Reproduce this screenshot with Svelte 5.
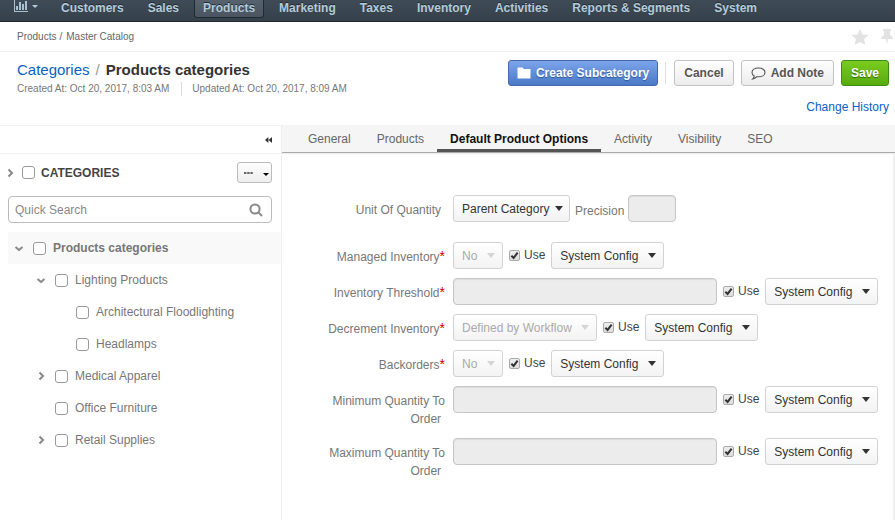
<script>
  const nav = ['Customers', 'Sales', 'Products', 'Marketing', 'Taxes', 'Inventory', 'Activities', 'Reports & Segments', 'System'];
  const tabs = ['General', 'Products', 'Default Product Options', 'Activity', 'Visibility', 'SEO'];
  const tree = [
    { name: 'Products categories', level: 0, state: 'open', selected: true },
    { name: 'Lighting Products', level: 1, state: 'open' },
    { name: 'Architectural Floodlighting', level: 2 },
    { name: 'Headlamps', level: 2 },
    { name: 'Medical Apparel', level: 1, state: 'closed' },
    { name: 'Office Furniture', level: 1 },
    { name: 'Retail Supplies', level: 1, state: 'closed' }
  ];
  const fields = [
    { id: 'managed', label: 'Managed Inventory', required: true, value: 'No' },
    { id: 'threshold', label: 'Inventory Threshold', required: true },
    { id: 'decrement', label: 'Decrement Inventory', required: true, value: 'Defined by Workflow' },
    { id: 'backorders', label: 'Backorders', required: true, value: 'No' },
    { id: 'minimum', label: 'Minimum Quantity To Order' },
    { id: 'maximum', label: 'Maximum Quantity To Order' }
  ];
</script>

{#snippet chevron(state)}
  <svg class="chevron" viewBox="0 0 10 10" aria-hidden="true">
    {#if state === 'open'}
      <path d="M1.5 4 L5 7 L8.5 4" />
    {:else if state === 'closed'}
      <path d="M3.5 1.5 L7 5 L3.5 8.5" />
    {/if}
  </svg>
{/snippet}

<div class="page">
  <nav class="topnav">
    <a class="dash" href="#dashboard" aria-label="Dashboards">
      <svg width="14" height="12" viewBox="0 0 14 12" aria-hidden="true">
        <path d="M0 0 H1 V11 H14 V12 H0 Z M2 6 H4 V10 H2 Z M5 2 H7 V10 H5 Z M8 4 H10 V10 H8 Z M11 1 H13 V10 H11 Z" fill="#a9c0cf" />
      </svg>
      <span class="caret"></span>
    </a>
    {#each nav as item}
      <a href="#top" class:current={item === 'Products'}>{item}</a>
    {/each}
  </nav>

  <div class="crumbs">
    <div class="trail"><a href="#products">Products</a><span>/</span><a href="#master">Master Catalog</a></div>
    <div class="marks">
      <button aria-label="Favorite">
        <svg width="18" height="16" viewBox="0 0 18 16"><path d="M9 0 L11.5 5.4 L17.5 6.1 L13.1 10 L14.3 16 L9 13 L3.7 16 L4.9 10 L.5 6.1 L6.5 5.4 Z" fill="#e2e2e2" /></svg>
      </button>
      <button aria-label="Pin">
        <svg width="12" height="16" viewBox="0 0 12 16"><path d="M2 0 H10 V2 H9 V6 Q12 7.5 12 10 H7 L6 16 L5 10 H0 Q0 7.5 3 6 V2 H2 Z" fill="#e2e2e2" /></svg>
      </button>
    </div>
  </div>

  <header>
    <div>
      <h1><a href="#categories">Categories</a><span>/</span>Products categories</h1>
      <div class="dates"><span>Created At: Oct 20, 2017, 8:03 AM</span><span>Updated At: Oct 20, 2017, 8:09 AM</span></div>
    </div>
    <div class="actions">
      <div class="buttons">
        <button class="btn blue">
          <svg width="14" height="12" viewBox="0 0 14 12" aria-hidden="true"><path d="M1 .5 H5.5 L6.8 2 H13 Q13.5 2 13.5 2.6 V11 Q13.5 11.5 13 11.5 H1 Q.5 11.5 .5 11 V1 Q.5 .5 1 .5 Z" fill="#fff" /></svg>
          Create Subcategory
        </button>
        <span class="rule"></span>
        <button class="btn">Cancel</button>
        <button class="btn">
          <svg width="15" height="13" viewBox="0 0 15 13" aria-hidden="true"><path d="M7.5 1 C11.2 1 14 2.9 14 5.4 C14 7.9 11.2 9.8 7.5 9.8 Q6.8 9.8 6 9.7 Q4.4 11.4 1.8 12 Q3.1 10.7 3.2 8.9 Q1 7.6 1 5.4 C1 2.9 3.8 1 7.5 1 Z" fill="none" stroke="#555" stroke-width="1.1" /></svg>
          Add Note
        </button>
        <button class="btn green">Save</button>
      </div>
      <a href="#history">Change History</a>
    </div>
  </header>

  <main>
    <aside>
      <div class="collapse">
        <button aria-label="Collapse sidebar">
          <svg width="7" height="6" viewBox="0 0 7 6"><path d="M3.4 0 V6 L0 3 Z M7 0 V6 L3.6 3 Z" fill="#333" /></svg>
        </button>
      </div>
      <div class="root">
        {@render chevron('closed')}
        <label><input type="checkbox" /><span>CATEGORIES</span></label>
        <button class="more" aria-label="More actions">
          <svg width="9" height="2" viewBox="0 0 9 2"><path d="M0 0 H2.4 V2 H0 Z M3.2 0 H5.6 V2 H3.2 Z M6.4 0 H8.8 V2 H6.4 Z" fill="#666" /></svg>
          <span class="caret"></span>
        </button>
      </div>
      <div class="search">
        <input type="text" placeholder="Quick Search" aria-label="Quick Search" />
        <svg width="14" height="14" viewBox="0 0 14 14" aria-hidden="true"><circle cx="6" cy="6" r="4.6" /><path d="M9.4 9.4 L13 13" /></svg>
      </div>
      <ul>
        {#each tree as node}
          <li class="level{node.level}" class:selected={node.selected}>
            {@render chevron(node.state)}
            <label><input type="checkbox" /><span>{node.name}</span></label>
          </li>
        {/each}
      </ul>
    </aside>

    <section>
      <div class="tabs">
        {#each tabs as tab}
          <a href="#tab" class:active={tab === 'Default Product Options'}>{tab}</a>
        {/each}
      </div>
      <form>
        <div class="row first">
          <label class="name" for="unit">Unit Of Quantity<em>&nbsp;</em></label>
          <div class="select near"><select id="unit"><option>Parent Category</option></select></div>
          <label class="precision" for="precision">Precision</label>
          <input class="short" id="precision" type="text" disabled />
        </div>
        {#each fields as field}
          <div class="row">
            <label class="name" for={field.id}>{field.label}{#if field.required}<em>*</em>{:else}<em>&nbsp;</em>{/if}</label>
            {#if field.value}
              <div class="select off"><select id={field.id} disabled><option>{field.value}</option></select></div>
            {:else}
              <input class="long" id={field.id} type="text" disabled />
            {/if}
            <label class="use"><input type="checkbox" checked />Use</label>
            <div class="select"><select aria-label="{field.label} fallback"><option>System Config</option></select></div>
          </div>
        {/each}
      </form>
    </section>
  </main>
</div>

<style>
  :global(body) {
    margin: 0;
    background: #fff;
  }
  .page {
    display: flex;
    flex-direction: column;
    min-height: 100vh;
    overflow: hidden;
    font: 12px/18px "Liberation Sans", Arial, sans-serif;
    color: #444;
  }
  .page * {
    box-sizing: border-box;
  }
  a {
    color: inherit;
    text-decoration: none;
    white-space: nowrap;
  }
  button, input, select {
    margin: 0;
    font: inherit;
  }
  button {
    display: flex;
    align-items: center;
    padding: 0;
    border: 0;
    background: none;
    cursor: pointer;
  }
  .caret {
    border: 3px solid transparent;
    border-top-color: currentColor;
    border-bottom: 0;
  }

  .topnav {
    display: flex;
    align-items: flex-start;
    gap: 6px;
    height: 22px;
    padding-left: 14px;
    border-bottom: 1px solid #222b33;
    background: linear-gradient(#3f4b57, #35404a);
    color: #b4cbda;
    font-weight: bold;
  }
  .topnav a {
    height: 18px;
    padding: 0 9px;
    line-height: 16px;
    text-shadow: 0 -1px 0 #222b33;
  }
  .topnav .dash {
    display: flex;
    align-items: center;
    gap: 4px;
    height: 12px;
    padding: 0 8px 0 0;
  }
  .topnav .current {
    border: 1px solid #222a31;
    border-top: 0;
    border-radius: 0 0 3px 3px;
    padding: 0 8px;
    background: linear-gradient(#56626e, #4a5561);
  }

  .crumbs {
    display: flex;
    align-items: center;
    justify-content: space-between;
    height: 30px;
    padding-left: 17px;
    border-bottom: 1px solid #eee;
    font-size: 10px;
    color: #666;
  }
  .trail span {
    margin: 0 4px 0 3px;
  }
  .marks {
    display: flex;
    gap: 12px;
    padding-right: 2px;
  }

  header {
    display: flex;
    justify-content: space-between;
    padding: 8px 6px 9px 17px;
  }
  h1 {
    margin: 0;
    font-size: 15px;
    line-height: 20px;
    color: #333;
  }
  h1 a, .actions > a {
    color: #0a5fc4;
    font-weight: normal;
  }
  h1 span {
    margin: 0 6px;
    color: #999;
    font-weight: normal;
  }
  .dates {
    display: flex;
    margin-top: 2px;
    font-size: 10px;
    line-height: 14px;
    color: #777;
  }
  .dates span + span {
    margin-left: 12px;
    padding-left: 10px;
    border-left: 1px solid #ddd;
  }
  .actions {
    display: flex;
    flex-direction: column;
    align-items: flex-end;
    gap: 12px;
  }
  .buttons {
    display: flex;
    gap: 7px;
  }
  .btn {
    gap: 5px;
    height: 26px;
    padding: 0 9px;
    border: 1px solid #c2c2c2;
    border-radius: 3px;
    background: linear-gradient(#fefefe, #ececec);
    color: #555;
    font-weight: bold;
    text-shadow: 0 1px 0 #fff;
    white-space: nowrap;
  }
  .blue {
    padding: 0 8px;
    border-color: #4669a9;
    background: linear-gradient(#7ba4ea, #4a79c8);
    color: #fff;
    text-shadow: 0 1px 1px #2f5596;
  }
  .green {
    border-color: #3d8c14;
    background: linear-gradient(#7bcb20, #56ab0e);
    color: #fff;
    text-shadow: 0 1px 1px #2c6b08;
  }
  .rule {
    width: 1px;
    margin: 2px 1px 2px 0;
    background: #ddd;
  }

  main {
    display: flex;
    flex: 1;
  }
  aside {
    flex: none;
    width: 282px;
    border-right: 1px solid #eee;
  }
  .collapse {
    display: flex;
    align-items: center;
    justify-content: flex-end;
    height: 29px;
    padding-right: 9px;
    border: solid #f0f0f0;
    border-width: 1px 0;
  }
  .chevron {
    width: 10px;
    height: 10px;
    flex: none;
    fill: none;
    stroke: #888;
    stroke-width: 2;
  }
  aside label {
    display: flex;
    align-items: center;
    gap: 7px;
    white-space: nowrap;
  }
  aside input[type="checkbox"] {
    appearance: none;
    width: 13px;
    height: 13px;
    border: 1px solid #999;
    border-radius: 3px;
    background: #fff;
  }
  aside input[type="checkbox"]:checked {
    background: #888;
  }
  .root {
    display: flex;
    align-items: center;
    gap: 7px;
    margin: 8px 9px 0 5px;
  }
  .root label {
    gap: 6px;
    font-weight: bold;
  }
  .more {
    gap: 10px;
    height: 21px;
    margin-left: auto;
    padding: 0 2px 0 6px;
    border: 1px solid #bbb;
    border-radius: 3px;
    background: linear-gradient(#fefefe, #eee);
    color: #000;
  }
  .more .caret {
    margin-top: 3px;
  }
  .search {
    display: flex;
    align-items: center;
    height: 27px;
    margin: 13px 9px 9px 8px;
    padding: 0 8px 0 6px;
    border: 1px solid #bbb;
    border-radius: 4px;
  }
  .search input {
    flex: 1;
    min-width: 0;
    padding: 0;
    border: 0;
    outline: 0;
    background: none;
  }
  .search input::placeholder {
    color: #888;
    opacity: 1;
  }
  .search svg {
    fill: none;
    stroke: #888;
    stroke-width: 2;
  }
  ul {
    margin: 0 0 0 8px;
    padding: 0;
    list-style: none;
  }
  li {
    display: flex;
    align-items: center;
    gap: 9px;
    height: 32px;
    padding-left: 6px;
    color: #777;
  }
  .level1 {
    padding-left: 28px;
  }
  .level2 {
    padding-left: 49px;
  }
  .selected {
    background: #f9f9f9;
    font-weight: bold;
  }

  section {
    flex: 1;
    min-width: 0;
  }
  .tabs {
    display: flex;
    height: 28px;
    padding-left: 13px;
    border-bottom: 1px solid #aaa;
    box-shadow: 0 1px 1px #eee;
    background: #f5f5f5;
    color: #666;
  }
  .tabs a {
    height: 27px;
    padding: 0 13px;
    line-height: 28px;
  }
  .tabs .active {
    border-bottom: 3px solid #555;
    color: #111;
    font-weight: bold;
  }

  form {
    display: flex;
    flex-direction: column;
    gap: 9px;
    padding: 42px 8px 12px 37px;
    border-right: 2px solid #f0f0f0;
    min-height: calc(100% - 28px);
  }
  .row {
    display: flex;
    align-items: flex-start;
    min-height: 27px;
  }
  .first {
    margin-bottom: 11px;
  }
  .name {
    flex: none;
    width: 126px;
    margin-right: 8px;
    padding: 6px 0 1px;
    text-align: right;
    color: #777;
  }
  em {
    font-style: normal;
    font-size: 14px;
    line-height: 1;
    color: #c00;
  }
  .select {
    position: relative;
    color: #333;
  }
  .select select {
    appearance: none;
    display: block;
    height: 27px;
    padding: 1px 24px 0 8px;
    border: 1px solid #d2d2d2;
    border-radius: 3px;
    background: linear-gradient(#fff, #f3f3f3);
    color: inherit;
    opacity: 1;
  }
  .near select {
    padding-right: 19px;
  }
  .select::after {
    content: "";
    position: absolute;
    top: 11px;
    right: 8px;
    border: 4px solid transparent;
    border-top: 5px solid currentColor;
    border-bottom: 0;
    pointer-events: none;
  }
  .near::after {
    right: 7px;
  }
  .off {
    color: #aaa;
  }
  .off::after {
    border-top-color: #d5d5d5;
  }
  .precision {
    margin-left: 5px;
    padding-top: 7px;
    color: #777;
  }
  .short, .long {
    height: 27px;
    border: 1px solid #c6c6c6;
    border-radius: 4px;
    background: #ececec;
    box-shadow: inset 0 1px 1px #ddd;
  }
  .short {
    width: 48px;
    margin-left: 4px;
  }
  .long {
    flex: 0 1 264px;
    min-width: 0;
  }
  .use {
    display: flex;
    align-items: center;
    gap: 4px;
    height: 26px;
    margin: 0 6px;
  }
  .use input {
    appearance: none;
    width: 11px;
    height: 11px;
    border: 1px solid #aaa;
    border-radius: 2px;
    background: linear-gradient(#eee, #ddd);
  }
  .use input:checked {
    background: url("data:image/svg+xml,%3Csvg xmlns='http://www.w3.org/2000/svg' viewBox='0 0 8 8'%3E%3Cpath d='M1.2 4.2L3.2 6.2L6.8 1.4' fill='none' stroke='%23333' stroke-width='1.8'/%3E%3C/svg%3E"), linear-gradient(#eee, #ddd);
  }
</style>
